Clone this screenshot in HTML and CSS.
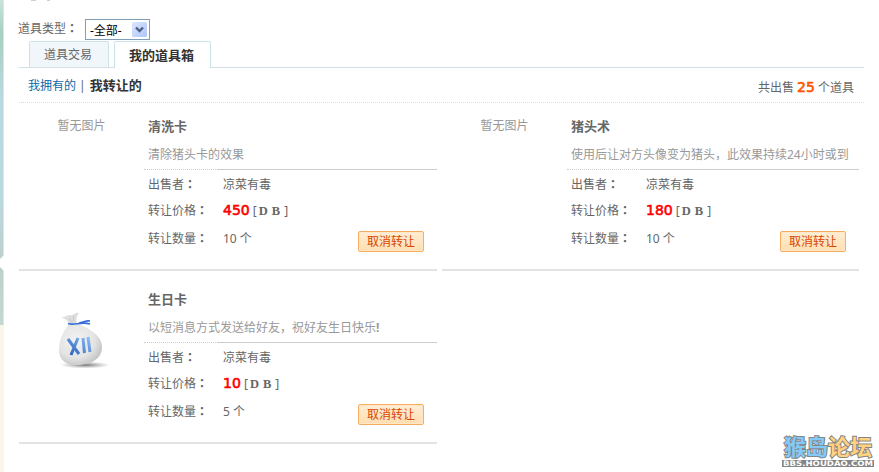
FILE: index.html
```html
<!DOCTYPE html>
<html lang="zh-CN">

<head>
    <meta charset="UTF-8">
    <title>我的道具箱</title>
    <link rel="stylesheet" href="styles.css">
</head>

<body>
    <div class="page">
        <aside class="side">
            <svg width="5" height="472" viewBox="0 0 5 472">
                <defs>
                    <linearGradient id="sky" x1="0" y1="0" x2="0" y2="1">
                        <stop offset="0" stop-color="#c8e4dd" />
                        <stop offset=".1" stop-color="#a8cfbf" />
                        <stop offset=".3" stop-color="#bad8e0" />
                        <stop offset=".6" stop-color="#bcd9e0" />
                        <stop offset=".8" stop-color="#bdcfcc" />
                        <stop offset="1" stop-color="#c4d8d2" />
                    </linearGradient>
                </defs>
                <rect width="4" height="325" fill="url(#sky)" />
                <rect x="3" width="1" height="325" fill="#d5e7e9" />
                <rect y="325" width="4" height="147" fill="#faf7ea" />
                <path d="M4 255L0 259V267L4 271Z" fill="#fff" />
            </svg>
        </aside>

        <main class="main">
            <div class="cut"><i></i><i></i></div>

            <div class="filter">
                <span>道具类型<i class="colon" lang="zh-TW">：</i></span>
                <div class="select">
                    <span>-全部-</span>
                    <svg width="15" height="15" viewBox="0 0 15 15">
                        <defs>
                            <linearGradient id="arrow" x1="0" y1="0" x2="1" y2="1">
                                <stop offset="0" stop-color="#dce7ff" />
                                <stop offset="1" stop-color="#aec5f8" />
                            </linearGradient>
                        </defs>
                        <rect width="15" height="15" rx="1.5" fill="url(#arrow)" />
                        <path d="M4 5.5L7.5 9L11 5.5" fill="none" stroke="#4d6185" stroke-width="2.4" />
                    </svg>
                </div>
            </div>

            <nav class="tabs">
                <a class="tab">道具交易</a>
                <a class="tab active">我的道具箱</a>
            </nav>

            <div class="subnav">
                <div class="links"><a>我拥有的</a><span class="sep">|</span><b>我转让的</b></div>
                <div class="total">共出售 <em>25</em> 个道具</div>
            </div>

            <div class="list">
                <div class="card">
                    <div class="thumb">暂无图片</div>
                    <div class="info">
                        <h3>清洗卡</h3>
                        <p>清除猪头卡的效果</p>
                        <dl>
                            <dt>出售者<i class="colon" lang="zh-TW">：</i></dt>
                            <dd>凉菜有毒</dd>
                            <dt>转让价格<i class="colon" lang="zh-TW">：</i></dt>
                            <dd><em class="price">450</em> [<b class="unit">DB</b>]</dd>
                            <dt>转让数量<i class="colon" lang="zh-TW">：</i></dt>
                            <dd class="count">10 个<a class="btn">取消转让</a></dd>
                        </dl>
                    </div>
                </div>

                <div class="card">
                    <div class="thumb">暂无图片</div>
                    <div class="info">
                        <h3>猪头术</h3>
                        <p>使用后让对方头像变为猪头，此效果持续24小时或到</p>
                        <dl>
                            <dt>出售者<i class="colon" lang="zh-TW">：</i></dt>
                            <dd>凉菜有毒</dd>
                            <dt>转让价格<i class="colon" lang="zh-TW">：</i></dt>
                            <dd><em class="price">180</em> [<b class="unit">DB</b>]</dd>
                            <dt>转让数量<i class="colon" lang="zh-TW">：</i></dt>
                            <dd class="count">10 个<a class="btn">取消转让</a></dd>
                        </dl>
                    </div>
                </div>

                <div class="card">
                    <div class="thumb picture">
                        <svg width="56" height="60" viewBox="0 0 56 60">
                            <defs>
                                <radialGradient id="bag" cx=".4" cy=".4" r=".65">
                                    <stop offset="0" stop-color="#f3f3f3" />
                                    <stop offset=".65" stop-color="#e4e4e4" />
                                    <stop offset="1" stop-color="#c4c4c4" />
                                </radialGradient>
                                <linearGradient id="num" gradientUnits="userSpaceOnUse" x1="12" y1="45" x2="26" y2="25">
                                    <stop offset="0" stop-color="#2b62b8" />
                                    <stop offset="1" stop-color="#86b8f4" />
                                </linearGradient>
                                <radialGradient id="shadow">
                                    <stop offset="0" stop-color="#777" />
                                    <stop offset="1" stop-color="#999" stop-opacity="0" />
                                </radialGradient>
                            </defs>
                            <ellipse cx="26" cy="54" rx="25" ry="3.5" fill="url(#shadow)" />
                            <path d="M10 13C9 9 6 8 2 6C6 7 8 4 11 4C14 5 16 1 20 2C17 6 17 9 18 12Z" fill="#dedede" />
                            <path d="M10 7L13 12M15 5L14 11" stroke="#c0c0c0" stroke-width=".8" />
                            <path d="M10 13C5 20 0 27 0 39C0 49 7 54 17 54C32 54 43 48 43 36C43 25 30 17 19 13Z" fill="url(#bag)" />
                            <path d="M9 12.5C15 15 22 10 31 13M20 12C24 12 27 9 31 10" fill="none" stroke="#356ed8" stroke-width="1.6" />
                            <path d="M9 28L20 43M19 27L12 44M24 27L25.500 42M29 26L31 41" fill="none" stroke="url(#num)" stroke-width="3" />
                        </svg>
                    </div>
                    <div class="info">
                        <h3>生日卡</h3>
                        <p>以短消息方式发送给好友，祝好友生日快乐<b>!</b></p>
                        <dl>
                            <dt>出售者<i class="colon" lang="zh-TW">：</i></dt>
                            <dd>凉菜有毒</dd>
                            <dt>转让价格<i class="colon" lang="zh-TW">：</i></dt>
                            <dd><em class="price">10</em> [<b class="unit">DB</b>]</dd>
                            <dt>转让数量<i class="colon" lang="zh-TW">：</i></dt>
                            <dd class="count">5 个<a class="btn">取消转让</a></dd>
                        </dl>
                    </div>
                </div>
            </div>
        </main>

        <svg class="watermark" width="96" height="40" viewBox="0 0 96 40">
            <text class="wm-name" x="3" y="22.500" textLength="88"><tspan fill="#83cafa">猴岛</tspan><tspan fill="#ffd27d">论坛</tspan></text>
            <rect x="1" y="28" width="92" height="7" fill="#858585" />
            <text class="wm-url" x="2" y="34" textLength="90" lengthAdjust="spacingAndGlyphs">BBS.HOUDAO.COM</text>
        </svg>
    </div>
</body>

</html>
```

FILE: styles.css
```css
* {
    margin: 0;
    padding: 0;
    box-sizing: border-box;
}

body {
    font: 12px/18px "Noto Sans", "Noto Sans CJK SC", sans-serif;
    background: #fff;
    color: #666;
    overflow: hidden;
}

em {
    font-style: normal;
}

.page {
    display: flex;
    position: relative;
    width: 879px;
    height: 472px;
}

.side {
    width: 19px;
}

.side svg {
    display: block;
}

.main {
    width: 845px;
}

/* bottom edge of the heading above */
.cut {
    display: flex;
    gap: 11px;
    height: 19px;
    padding-left: 12px;
}

.cut i {
    width: 5px;
    height: 1px;
    background: #c3d3dd;
}

.cut i + i {
    width: 3px;
}

.filter {
    display: flex;
    height: 22px;
    line-height: 20px;
}

.filter > span {
    width: 67px;
    margin-left: -1px;
}

.colon {
    font-family: "Noto Sans CJK TC", sans-serif;
    font-style: normal;
    font-weight: bold;
    line-height: 1;
}

.select {
    display: flex;
    justify-content: space-between;
    width: 65px;
    height: 21px;
    padding: 2px 2px 2px 4px;
    border: 1px solid #7f9db9;
    color: #000;
    line-height: 18px;
}

.tabs {
    display: flex;
    gap: 5px;
    height: 27px;
    padding-left: 10px;
    border-bottom: 1px solid #d2dfe5;
}

.tab {
    width: 80px;
    height: 26px;
    padding-right: 2px;
    border: 1px solid #cbe2e8;
    border-bottom: 0;
    border-radius: 2px 2px 0 0;
    background: #f0f6fa;
    line-height: 26px;
    text-align: center;
}

.tab.active {
    width: 97px;
    height: 27px;
    background: #fff;
    color: #333;
    font-weight: bold;
    font-size: 13px;
}

.subnav {
    display: flex;
    justify-content: space-between;
    height: 35px;
    padding: 0 10px 0 9px;
    border-bottom: 1px dotted #ddd;
    line-height: 35px;
}

.links a {
    color: #0a67a8;
}

.sep {
    margin: 0 4px 0 3px;
}

.links b {
    color: #333;
    font-size: 13px;
}

.total {
    padding-top: 2px;
}

.total em {
    color: #f50;
    font: 14px "DejaVu Sans", sans-serif;
    -webkit-text-stroke: .6px;
}

.list {
    display: grid;
    grid-template-columns: 418px 417px;
    gap: 5px;
}

.card {
    display: flex;
    height: 168px;
    border-bottom: 2px solid #e3e3e3;
}

.thumb {
    width: 125px;
    padding-top: 14px;
    color: #999;
    text-align: center;
}

.picture {
    padding: 35px 0 0 40px;
    text-align: left;
}

.info {
    flex: 1;
    min-width: 0;
    padding-top: 14px;
}

.info h3 {
    padding-left: 4px;
    font-size: 13px;
    line-height: 18px;
}

.info p {
    height: 34px;
    padding: 11px 0 0 4px;
    color: #999;
    white-space: nowrap;
}

.info dl {
    display: grid;
    grid-template-columns: 74px 1fr;
    grid-template-rows: 28px 26px 30px;
}

.info dt,
.info dd {
    padding-left: 5px;
    line-height: 27px;
}

.info dt {
    padding-left: 4px;
}

.info dt:first-of-type {
    border-top: 1px dotted #ccc;
    line-height: 29px;
}

.info dd:first-of-type {
    border-top: 1px solid #ccc;
    line-height: 29px;
}

.price {
    color: #f00;
    font: 14px "DejaVu Sans", sans-serif;
    -webkit-text-stroke: .6px;
}

.unit {
    margin-left: 2px;
    font-family: "Liberation Serif", serif;
    font-size: 12.5px;
    letter-spacing: 4px;
}

.info .count {
    display: flex;
    justify-content: space-between;
    line-height: 31px;
}

.info dt:last-of-type {
    line-height: 31px;
}

.btn {
    width: 66px;
    height: 21px;
    margin: 8px 13px 0 0;
    border: 1px solid #f7ad60;
    border-radius: 2px;
    background: linear-gradient(#ffedd4, #ffdeb0);
    box-shadow: inset 0 0 0 1px #ffe8c7;
    color: #d94600;
    line-height: 19px;
    text-align: center;
}

/* site mark laid over the lower right corner */
.watermark {
    position: absolute;
    right: 2px;
    bottom: 0;
}

.wm-name {
    font: bold 22px "Noto Sans CJK SC", sans-serif;
    stroke: #858585;
    stroke-width: 2px;
    paint-order: stroke;
}

.wm-url {
    font: bold 7.5px "DejaVu Sans", sans-serif;
    fill: #fff;
}
```
